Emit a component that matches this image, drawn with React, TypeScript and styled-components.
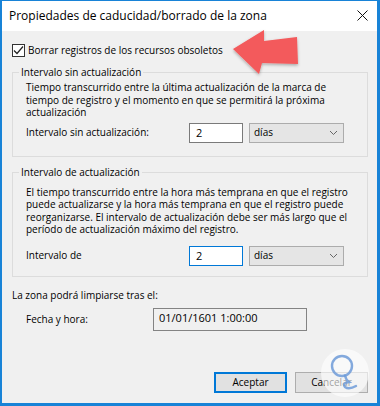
import React from 'react';
import styled, { createGlobalStyle } from 'styled-components';

const GlobalStyle = createGlobalStyle`
  html, body {
    margin: 0;
    padding: 0;
    background: #ffffff;
  }
  body {
    font-family: 'Open Sans', 'Noto Sans', sans-serif;
  }
`;

const CheckIcon = () => (
  <svg width="11" height="11" viewBox="0 0 11 11">
    <polyline points="1,5.5 4,8.5 10,1.5" fill="none" stroke="#222" strokeWidth="1.2" />
  </svg>
);

const Chevron = () => (
  <svg width="9" height="6" viewBox="0 0 9 6">
    <polyline points="1,1 4.5,4.5 8,1" fill="none" stroke="#666" strokeWidth="1" />
  </svg>
);

const App = () => {
  return (
    <>
      <GlobalStyle />
      <Window>
        <TitleBar>
          <Title>Propiedades de caducidad/borrado de la zona</Title>
          <CloseIcon viewBox="0 0 11 11">
            <path d="M0.5 0.5 L10.5 10.5 M10.5 0.5 L0.5 10.5" stroke="#111" strokeWidth="1" />
          </CloseIcon>
        </TitleBar>

        <Body>
          <CheckRow>
            <CheckBox>
              <CheckIcon />
            </CheckBox>
            <span>Borrar registros de los recursos obsoletos</span>
          </CheckRow>

          <Group $gap={2} $rowGap={4} $bottom={13}>
            <legend>Intervalo sin actualización</legend>
            <Description>
              Tiempo transcurrido entre la última actualización de la marca de tiempo de registro y el
              momento en que se permitirá la próxima actualización
            </Description>
            <FieldRow>
              <span>Intervalo sin actualización:</span>
              <NumberBox>2</NumberBox>
              <Select>
                <span>días</span>
                <Chevron />
              </Select>
            </FieldRow>
          </Group>

          <Group $gap={7} $rowGap={10} $bottom={10}>
            <legend>Intervalo de actualización</legend>
            <Description>
              El tiempo transcurrido entre la hora más temprana en que el registro puede actualizarse y la
              hora más temprana en que el registro puede reorganizarse. El intervalo de actualización debe
              ser más largo que el período de actualización máximo del registro.
            </Description>
            <FieldRow>
              <span>Intervalo de</span>
              <NumberBox $focused>2</NumberBox>
              <Select>
                <span>días</span>
                <Chevron />
              </Select>
            </FieldRow>
          </Group>

          <Caption>La zona podrá limpiarse tras el:</Caption>
          <DateRow>
            <span>Fecha y hora:</span>
            <ReadOnlyBox>01/01/1601 1:00:00</ReadOnlyBox>
          </DateRow>

          <Footer>
            <Button $primary>Aceptar</Button>
            <Button>Cancelar</Button>
          </Footer>
        </Body>

        <Arrow viewBox="225 25 85 60" width="85" height="60">
          <defs>
            <filter id="arrowShadow" x="-20%" y="-20%" width="140%" height="150%">
              <feDropShadow dx="0" dy="1.5" stdDeviation="1.5" floodColor="#000" floodOpacity="0.3" />
            </filter>
          </defs>
          <polygon
            points="233,49 264,30 264,41 297,37 298,64 262,63 259,74"
            fill="#f35a5b"
            filter="url(#arrowShadow)"
          />
        </Arrow>

        <Watermark viewBox="0 0 52 54" width="52" height="54">
          <circle cx="26" cy="26" r="24" fill="#ffffff" opacity="0.62" />
          <circle cx="23" cy="19" r="10" fill="none" stroke="#6e9bd8" strokeWidth="2.4" opacity="0.85" />
          <path
            d="M26 28.5 Q27 33 30 35 Q23 36 26 40 Q30 43 37 39"
            fill="none"
            stroke="#6e9bd8"
            strokeWidth="2.4"
            strokeLinecap="round"
            opacity="0.85"
          />
        </Watermark>
      </Window>
    </>
  );
};

export default App;

const Window = styled.div`
  position: relative;
  width: 380px;
  height: 406px;
  box-sizing: border-box;
  border-style: solid;
  border-color: #1883d7;
  border-width: 1px 3px 3px 2px;
  display: flex;
  flex-direction: column;
  overflow: hidden;
  font-family: 'Open Sans', 'Noto Sans', sans-serif;
  font-size: 10px;
  line-height: 13px;
  color: #000;
`;

const TitleBar = styled.div`
  height: 30px;
  flex-shrink: 0;
  background: #ffffff;
  display: flex;
  align-items: center;
  justify-content: space-between;
  padding: 0 9px 0 7px;
`;

const Title = styled.div`
  font-size: 12px;
  color: #000;
  margin-top: -2px;
`;

const CloseIcon = styled.svg`
  width: 11px;
  height: 11px;
  margin-top: -1px;
`;

const Body = styled.div`
  flex: 1;
  background: #f0f0f0;
  display: flex;
  flex-direction: column;
  padding: 13px 9px 10px 10px;
`;

const CheckRow = styled.div`
  display: flex;
  align-items: center;
  gap: 3px;
  height: 13px;
`;

const CheckBox = styled.div`
  width: 13px;
  height: 13px;
  box-sizing: border-box;
  border: 1px solid #333;
  background: #fff;
  display: flex;
  align-items: center;
  justify-content: center;
`;

const Group = styled.fieldset<{ $gap: number; $rowGap: number; $bottom: number }>`
  margin: 9px 0 0 0;
  border: 1px solid #dcdcdc;
  padding: ${({ $gap }) => $gap}px 13px ${({ $bottom }) => $bottom}px 13px;
  min-width: 0;

  legend {
    padding: 0 2px;
    margin-left: -7px;
    line-height: 13px;
  }

  & > div:last-child {
    margin-top: ${({ $rowGap }) => $rowGap}px;
  }
`;

const Description = styled.p`
  margin: 0;
  line-height: 12.5px;
`;

const FieldRow = styled.div`
  display: grid;
  grid-template-columns: 157px 54px 95px;
  column-gap: 6px;
  align-items: center;
`;

const NumberBox = styled.div<{ $focused?: boolean }>`
  height: 20px;
  box-sizing: border-box;
  background: #fff;
  border: 1px solid ${({ $focused }) => ($focused ? '#0078d7' : '#7a7a7a')};
  padding: 0 6px;
  display: flex;
  align-items: center;
  font-size: 11px;
`;

const Select = styled.div`
  height: 20px;
  box-sizing: border-box;
  background: #e5e5e5;
  border: 1px solid #acacac;
  padding: 0 5px 0 4px;
  display: flex;
  align-items: center;
  justify-content: space-between;
`;

const Caption = styled.div`
  margin-top: 12px;
`;

const DateRow = styled.div`
  display: grid;
  grid-template-columns: 127px 154px;
  align-items: center;
  padding-left: 14px;
  margin-top: 6px;
`;

const ReadOnlyBox = styled.div`
  height: 23px;
  box-sizing: border-box;
  border: 1px solid #838383;
  background: #f0f0f0;
  padding: 2px 5px;
  font-size: 11px;
`;

const Footer = styled.div`
  margin-top: auto;
  display: flex;
  justify-content: flex-end;
  gap: 8px;
`;

const Button = styled.div<{ $primary?: boolean }>`
  width: 73px;
  height: 21px;
  box-sizing: border-box;
  background: #e1e1e1;
  border: ${({ $primary }) => ($primary ? '2px solid #0078d7' : '1px solid #adadad')};
  display: flex;
  align-items: center;
  justify-content: center;
`;

const Arrow = styled.svg`
  position: absolute;
  left: 223px;
  top: 24px;
  overflow: visible;
`;

const Watermark = styled.svg`
  position: absolute;
  left: 317px;
  top: 346px;
`;
